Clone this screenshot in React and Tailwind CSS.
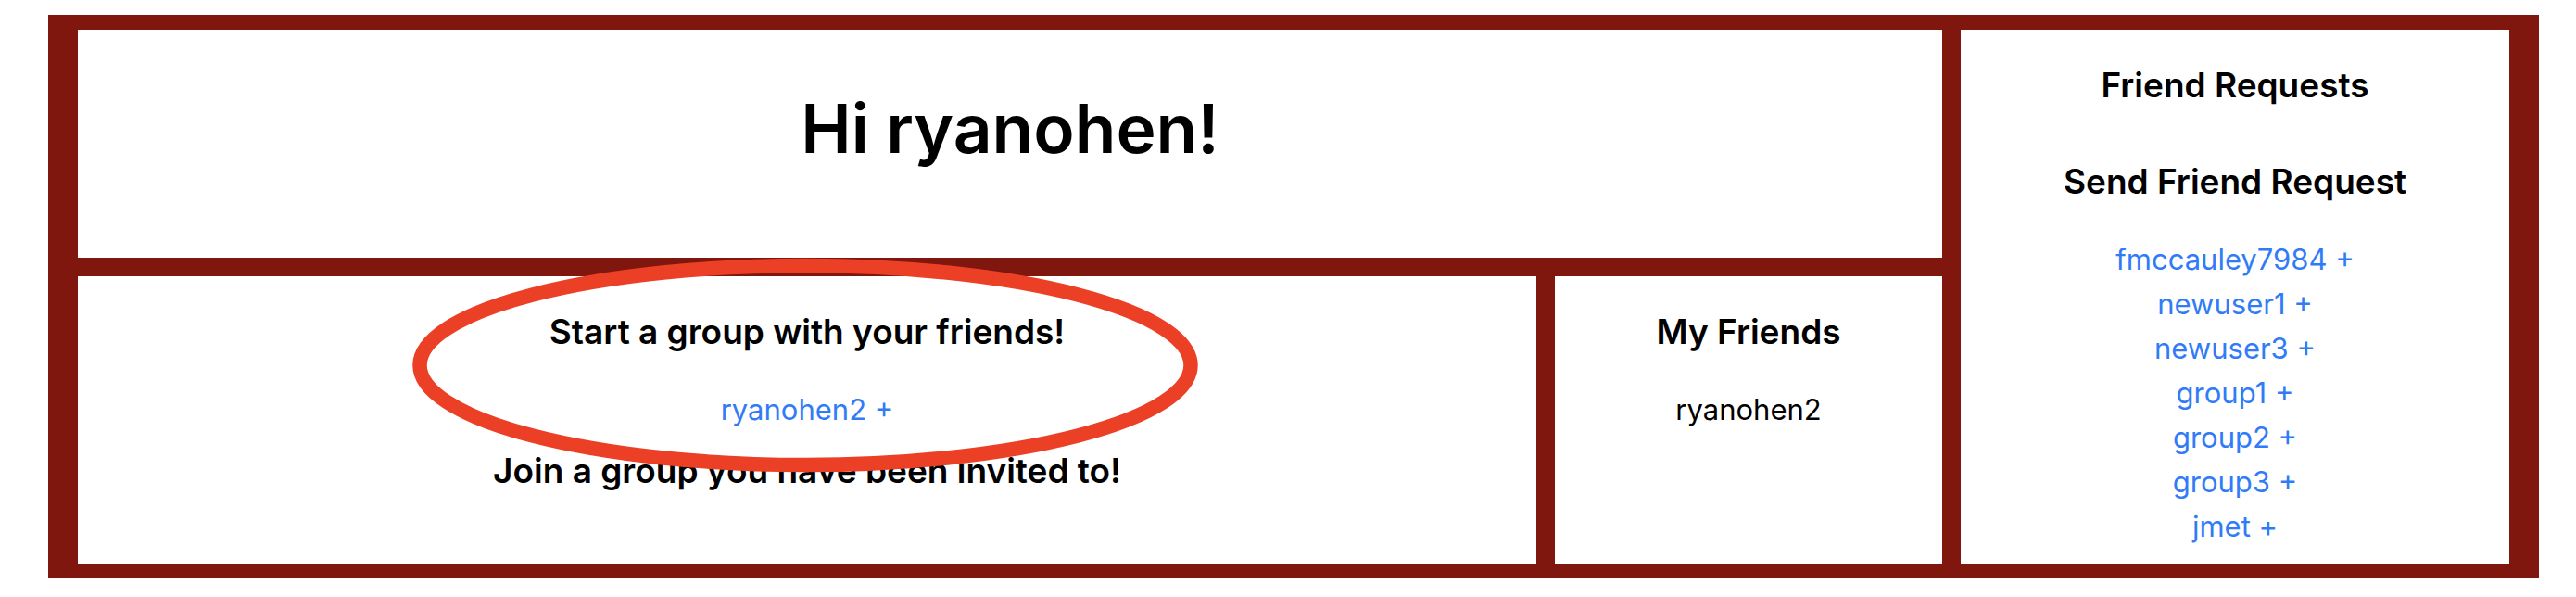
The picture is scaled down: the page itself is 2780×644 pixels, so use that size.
const groupCandidates = ['ryanohen2'];
const friends = ['ryanohen2'];
const people = ['fmccauley7984', 'newuser1', 'newuser3', 'group1', 'group2', 'group3', 'jmet'];

function Heading({ children }) {
  return <h2 className="text-[37px] leading-12 font-semibold">{children}</h2>;
}

function AddList({ names }) {
  return (
    <ul>
      {names.map((name) => (
        <li key={name}>
          <a href={`#${name}`} className="text-[#317cf6]">
            {name} +
          </a>
        </li>
      ))}
    </ul>
  );
}

function Highlight() {
  return (
    <svg
      aria-hidden="true"
      viewBox="0 0 852 232"
      className="pointer-events-none absolute -top-5 left-1/2 w-[852px] max-w-none -translate-x-1/2"
    >
      <ellipse cx="424" cy="116" rx="416" ry="107.5" fill="none" stroke="#ec4026" strokeWidth="15.5" />
    </svg>
  );
}

export default function App() {
  return (
    <div className="bg-white py-4 pr-10 pl-13 font-['Inter',sans-serif] text-[31px] leading-12 text-black">
      <main className="grid grid-cols-[1574fr_418fr_592fr] grid-rows-[246px_310px] gap-5 bg-[#7f170e] px-8 py-4 text-center">
        <header className="col-span-2 flex items-center justify-center bg-white pb-8">
          <h1 className="text-[73px] leading-24 font-semibold">Hi ryanohen!</h1>
        </header>

        <aside className="col-start-3 row-span-2 row-start-1 bg-white pt-9">
          <Heading>Friend Requests</Heading>
          <div className="mt-14 flex flex-col gap-9">
            <Heading>Send Friend Request</Heading>
            <AddList names={people} />
          </div>
        </aside>

        <section className="relative bg-white pt-9">
          <div className="flex flex-col gap-9">
            <Heading>Start a group with your friends!</Heading>
            <AddList names={groupCandidates} />
          </div>
          <div className="mt-4.5">
            <Heading>Join a group you have been invited to!</Heading>
          </div>
          <Highlight />
        </section>

        <section className="flex flex-col gap-9 bg-white pt-9">
          <Heading>My Friends</Heading>
          <ul>
            {friends.map((name) => (
              <li key={name}>{name}</li>
            ))}
          </ul>
        </section>
      </main>
    </div>
  );
}
